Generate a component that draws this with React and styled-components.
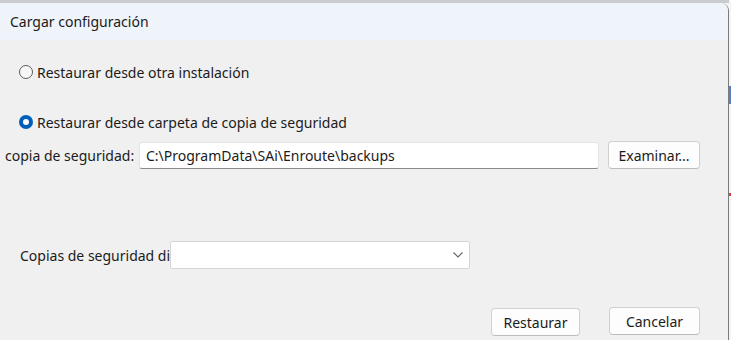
import React from "react";
import styled, { createGlobalStyle } from "styled-components";

const Global = createGlobalStyle`
  html, body { margin: 0; padding: 0; }
  body {
    background: #f3f3f3;
    font-family: "Noto Sans", "Open Sans", "DejaVu Sans", sans-serif;
    color: #1b1b1b;
  }
`;

const Screen = styled.div`
  width: 731px;
  height: 340px;
  display: flex;
  overflow: hidden;
  background: linear-gradient(#c9cbcd 0, #c9cbcd 3px, #f4f4f4 3px);
`;

const Window = styled.div`
  width: 728px;
  margin-top: 3px;
  display: flex;
  flex-direction: column;
  background: #f0f0f0;
  border-right: 1px solid #7b7b7b;
  border-top-right-radius: 8px;
  overflow: hidden;
`;

const Backdrop = styled.div`
  flex: 1;
  background: linear-gradient(
    #f4f4f4 0, #f4f4f4 86px, #5b7fc4 86px, #5b7fc4 104px,
    #f4f4f4 104px, #f4f4f4 193px, #d04040 193px, #d04040 196px, #f4f4f4 196px
  );
`;

const TitleBar = styled.div`
  height: 37px;
  flex: none;
  display: flex;
  align-items: center;
  padding-left: 10px;
  background: #eef4f9;
  font-size: 14px;
  color: #1a1a1a;
`;

const Body = styled.div`
  flex: 1;
  display: flex;
  flex-direction: column;
  font-size: 14px;
`;

const RadioRow = styled.label`
  display: flex;
  align-items: center;
  gap: 4px;
  height: 20px;
  margin-top: ${(p) => p.$top}px;
  padding-left: 19px;
`;

const RadioDot = styled.span`
  width: 14px;
  height: 14px;
  box-sizing: border-box;
  border-radius: 50%;
  flex: none;
  display: flex;
  align-items: center;
  justify-content: center;
  border: ${(p) => (p.$checked ? "none" : "1px solid #5d5d5d")};
  background: ${(p) => (p.$checked ? "#005fb8" : "#f7f7f7")};
  &::after {
    content: "";
    display: ${(p) => (p.$checked ? "block" : "none")};
    width: 6px;
    height: 6px;
    border-radius: 50%;
    background: #ffffff;
  }
`;

const FieldRow = styled.div`
  display: flex;
  align-items: center;
  margin-top: ${(p) => p.$top}px;
  padding-left: ${(p) => p.$left}px;
`;

const Label = styled.span`
  width: ${(p) => p.$width}px;
  white-space: nowrap;
  flex: none;
`;

const TextBox = styled.div`
  width: 460px;
  height: 27px;
  box-sizing: border-box;
  background: #ffffff;
  border: 1px solid #e4e4e4;
  border-bottom: 1px solid #8a8a8a;
  border-radius: 3px;
  display: flex;
  align-items: center;
  padding-left: 6px;
  font-size: 14px;
`;

const Combo = styled.div`
  width: 300px;
  height: 28px;
  box-sizing: border-box;
  background: #ffffff;
  border: 1px solid #d5d5d5;
  border-radius: 2px;
  display: flex;
  align-items: center;
  justify-content: flex-end;
  padding-right: 5px;
`;

const Button = styled.button`
  width: ${(p) => p.$width}px;
  height: 28px;
  margin-left: ${(p) => p.$left}px;
  margin-top: ${(p) => p.$dy || 0}px;
  box-sizing: border-box;
  background: #fdfdfd;
  border: 1px solid #d0d0d0;
  border-bottom-color: #bdbdbd;
  border-radius: 4px;
  font-family: inherit;
  font-size: 14px;
  color: #1b1b1b;
  padding: 0;
  flex: none;
`;

const Footer = styled.div`
  display: flex;
  align-items: flex-start;
  margin-top: 38px;
  padding-left: 491px;
`;

const Chevron = () => (
  <svg width="12" height="8" viewBox="0 0 12 8">
    <path d="M1.5 1.5 L6 6 L10.5 1.5" fill="none" stroke="#606060" strokeWidth="1.1" />
  </svg>
);

export default function App() {
  return (
    <Screen>
      <Global />
      <Window>
        <TitleBar>Cargar configuración</TitleBar>
        <Body>
          <RadioRow $top={22}>
            <RadioDot />
            Restaurar desde otra instalación
          </RadioRow>
          <RadioRow $top={30}>
            <RadioDot $checked />
            Restaurar desde carpeta de copia de seguridad
          </RadioRow>
          <FieldRow $top={9} $left={5}>
            <Label $width={134}>copia de seguridad:</Label>
            <TextBox>C:\ProgramData\SAi\Enroute\backups</TextBox>
            <Button $width={92} $left={9}>Examinar...</Button>
          </FieldRow>
          <FieldRow $top={72} $left={20}>
            <Label $width={150}>Copias de seguridad di</Label>
            <Combo>
              <Chevron />
            </Combo>
          </FieldRow>
          <Footer>
            <Button $width={89} $left={0} $dy={1}>Restaurar</Button>
            <Button $width={91} $left={29}>Cancelar</Button>
          </Footer>
        </Body>
      </Window>
      <Backdrop />
    </Screen>
  );
}
